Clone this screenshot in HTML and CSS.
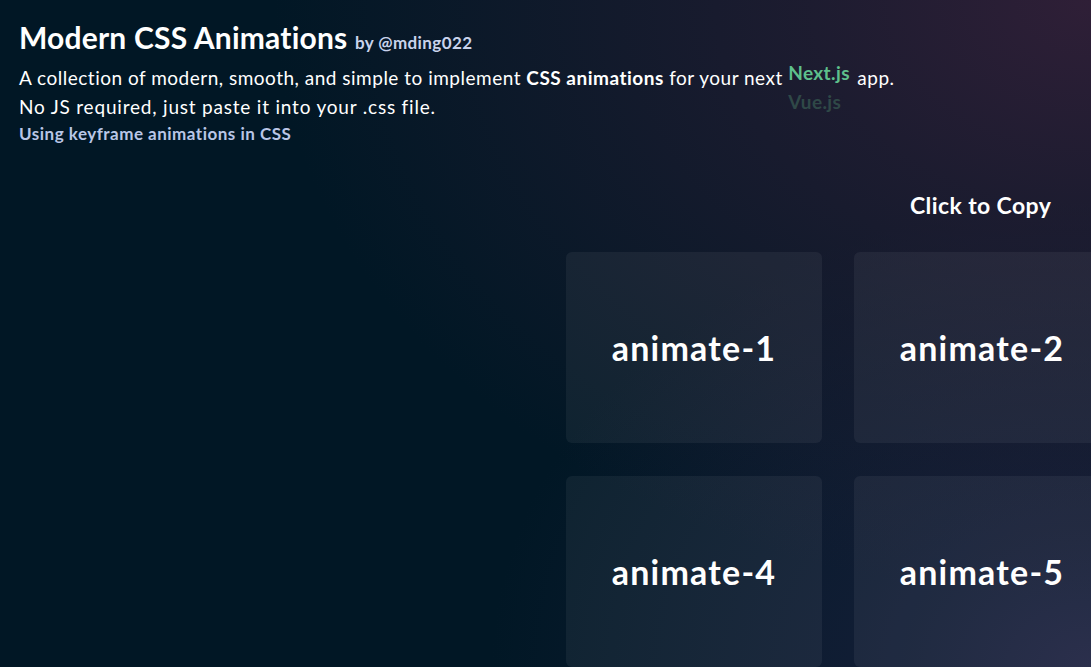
FILE: index.html
```html
<!DOCTYPE html>
<html lang="en">
<head>
<meta charset="utf-8">
<title>Modern CSS Animations</title>
<link rel="stylesheet" href="styles.css">
</head>
<body>
<div class="page">
  <header class="header">
    <h1 class="title">Modern CSS Animations <span class="by">by @mding022</span></h1>
    <p class="desc">A collection of modern, smooth, and simple to implement <strong>CSS animations</strong> for your next <span class="rotator"><span class="word next">Next.js</span><span class="word vue">Vue.js</span></span> app.</p>
    <p class="desc desc-wide">No JS required, just paste it into your .css file.</p>
    <p class="sub">Using keyframe animations in CSS</p>
  </header>
  <main class="main">
    <div class="preview"></div>
    <section class="gallery">
      <div class="copy-hint">Click to Copy</div>
      <div class="grid">
        <div class="card"><span class="card-label">animate-1</span></div>
        <div class="card"><span class="card-label">animate-2</span></div>
        <div class="card"><span class="card-label">animate-3</span></div>
        <div class="card"><span class="card-label">animate-4</span></div>
        <div class="card"><span class="card-label">animate-5</span></div>
        <div class="card"><span class="card-label">animate-6</span></div>
      </div>
    </section>
  </main>
</div>
</body>
</html>
```

FILE: styles.css
```css
html, body {
  margin: 0;
  padding: 0;
  height: 100%;
  overflow: hidden;
}
body {
  font-family: "Lato", "Noto Sans", sans-serif;
  color: #ffffff;
  background:
    radial-gradient(ellipse 75% 90% at 100% 0%, #2f1f37 0%, rgba(47,31,55,0.6) 35%, rgba(47,31,55,0) 100%),
    radial-gradient(ellipse 55% 70% at 100% 100%, #1f2342 0%, rgba(31,35,66,0.5) 40%, rgba(31,35,66,0) 100%),
    #011725;
}
.page {
  width: 1400px;
}
.header {
  padding: 17px 19px 0;
}
.title {
  margin: 0;
  font-size: 30px;
  font-weight: 700;
  line-height: 40px;
  letter-spacing: 0.2px;
}
.by {
  font-size: 17px;
  font-weight: 700;
  color: #c9d3ec;
  letter-spacing: 0.4px;
}
.desc {
  margin: 0;
  font-size: 19px;
  line-height: 29px;
  font-weight: 400;
  letter-spacing: 0.5px;
}
.desc-wide {
  letter-spacing: 0.8px;
}
.desc strong {
  font-weight: 700;
}
.rotator {
  display: inline-flex;
  flex-direction: column;
  vertical-align: top;
  height: 29px;
  position: relative;
  top: -5px;
  margin-right: 2px;
}
.word {
  font-weight: 700;
  font-size: 19px;
  line-height: 29px;
  letter-spacing: 0.4px;
}
.next {
  color: #5ec08c;
}
.vue {
  color: #2f4847;
}
.sub {
  margin: 0;
  font-size: 17px;
  line-height: 26px;
  font-weight: 700;
  color: #b9c6e6;
  letter-spacing: 0.5px;
}
.main {
  display: flex;
  padding-top: 44px;
}
.preview {
  width: 566px;
  flex: none;
}
.gallery {
  display: flex;
  flex-direction: column;
}
.copy-hint {
  font-size: 23px;
  font-weight: 700;
  line-height: 28px;
  letter-spacing: 0.4px;
  padding-left: 344px;
  margin-bottom: 33px;
}
.grid {
  display: grid;
  grid-template-columns: repeat(3, 256px);
  grid-auto-rows: 191px;
  gap: 33px 32px;
}
.card {
  background: rgba(255,255,255,0.055);
  border-radius: 6px;
  display: flex;
  align-items: center;
  justify-content: center;
}
.card-label {
  font-size: 34px;
  font-weight: 700;
  letter-spacing: 1.2px;
  white-space: nowrap;
}
```
